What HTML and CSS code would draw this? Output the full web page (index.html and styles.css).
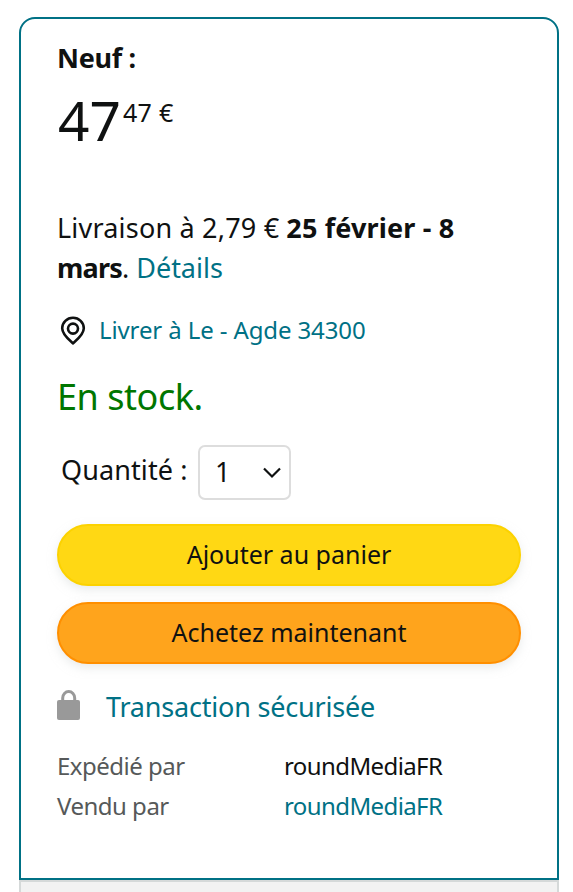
FILE: index.html
```html
<!DOCTYPE html>
<html lang="fr">
<head>
  <meta charset="utf-8">
  <title>Neuf : 47,47 €</title>
  <link rel="stylesheet" href="styles.css">
</head>

<body>
<div class="buybox">
  <div class="condition">Neuf :</div>

  <div class="price">
    <span class="price-whole">47</span>
    <span class="price-fraction">47 €</span>
  </div>

  <div class="delivery">
    <div><span class="delivery-cost">Livraison à 2,79 €</span> <b class="delivery-date">25 février - 8</b></div>
    <div><b class="delivery-month">mars</b>. <a class="link details" href="#">Détails</a></div>
  </div>

  <div class="location">
    <svg class="pin" viewBox="0 0 26 30" width="26" height="30">
      <path d="M13 27.2 C10 24.4 2.2 19 2.2 12.3 A10.8 10.6 0 0 1 23.8 12.3 C23.8 19 16 24.4 13 27.2 Z" />
      <circle cx="13" cy="12.6" r="5" />
    </svg>
    <a class="link location-link" href="#">Livrer à Le - Agde 34300</a>
  </div>

  <div class="stock">En stock.</div>

  <div class="quantity">
    <span class="quantity-label">Quantité :</span>
    <div class="quantity-select">
      <span class="quantity-value">1</span>
      <svg class="chevron" viewBox="0 0 18 12" width="18" height="12">
        <path d="M1 1.5 L9 9.5 L17 1.5" />
      </svg>
    </div>
  </div>

  <div class="buttons">
    <button class="btn btn-cart" type="button">Ajouter au panier</button>
    <button class="btn btn-buy" type="button">Achetez maintenant</button>
  </div>

  <div class="secure">
    <svg class="lock" viewBox="0 0 24 30" width="24" height="30">
      <path class="lock-shackle" d="M5.7 12 V8 A6 6.4 0 0 1 17.7 8 V12" />
      <rect x="0" y="10" width="23" height="20" rx="2" />
    </svg>
    <a class="link secure-link" href="#">Transaction sécurisée</a>
  </div>

  <div class="merchant">
    <span class="merchant-label">Expédié par</span>
    <span class="merchant-name">roundMediaFR</span>
    <span class="merchant-label">Vendu par</span>
    <a class="link merchant-name" href="#">roundMediaFR</a>
  </div>
</div>
<div class="next-offer"></div>
</body>
</html>
```
FILE: styles.css
```css
* {
  box-sizing: border-box;
}

body {
  margin: 0;
  padding: 17px 14px 0 19px;
  height: 892px;
  overflow: hidden;
  background: #fff;
  color: #0f1111;
  font-family: "Noto Sans", "Open Sans", sans-serif;
  font-size: 27px;
  line-height: 40px;
  white-space: nowrap;
}

.link {
  color: #007185;
  text-decoration: none;
}

.buybox {
  height: 863px;
  padding: 19px 36px 0;
  border: 2px solid #007185;
  border-radius: 16px 16px 0 0;
}

.condition {
  font-weight: 700;
  letter-spacing: -0.3px;
}

.price {
  display: flex;
  margin-top: 7px;
  height: 70px;
}

.price-whole {
  margin-left: 1px;
  font-size: 55px;
  line-height: 70px;
}

.price-fraction {
  margin: 9px 0 0 2px;
  font-size: 25px;
  line-height: 36px;
  letter-spacing: 0.3px;
}

.delivery {
  margin-top: 53px;
}

.delivery-cost {
  letter-spacing: 0.2px;
}

.delivery-date {
  letter-spacing: 0.15px;
}

.delivery-month {
  letter-spacing: -0.8px;
}

.location {
  display: flex;
  align-items: center;
  gap: 13px;
  margin: 22px 0 0 3px;
  font-size: 24px;
  letter-spacing: -0.12px;
}

.pin {
  margin-top: 2px;
  fill: none;
  stroke: #0f1111;
  stroke-width: 2.6;
}

.stock {
  margin-top: 23px;
  color: #007600;
  font-size: 36px;
  line-height: 48px;
  letter-spacing: -0.45px;
}

.quantity {
  display: flex;
  align-items: center;
  gap: 10px;
  height: 55px;
  margin: 24px 0 0 4px;
}

.quantity-label {
  width: 127px;
  padding-bottom: 5px;
  letter-spacing: 0.1px;
}

.quantity-select {
  display: flex;
  align-items: center;
  justify-content: space-between;
  width: 93px;
  height: 55px;
  padding: 0 8px 0 15px;
  border: 2px solid #ddd;
  border-radius: 7px;
}

.quantity-value {
  padding-bottom: 2px;
}

.chevron {
  fill: none;
  stroke: #0f1111;
  stroke-width: 2.2;
}

.buttons {
  display: flex;
  flex-direction: column;
  gap: 16px;
  margin-top: 24px;
}

.btn {
  height: 62px;
  padding: 0 0 2px;
  border: 2px solid;
  border-radius: 31px;
  box-shadow: 0 4px 10px rgba(213, 217, 217, 0.5);
  color: #0f1111;
  font-family: inherit;
  font-size: 25px;
}

.btn-cart {
  background: #ffd814;
  border-color: #fcd200;
}

.btn-buy {
  background: #ffa41c;
  border-color: #ff8f00;
}

.secure {
  display: flex;
  gap: 25px;
  margin-top: 23px;
  letter-spacing: -0.2px;
}

.lock {
  margin-top: 3px;
  fill: #999;
}

.lock-shackle {
  fill: none;
  stroke: #999;
  stroke-width: 3;
}

.merchant {
  display: grid;
  grid-template-columns: 227px 1fr;
  margin-top: 19px;
  font-size: 24px;
}

.merchant-label {
  color: #565959;
  letter-spacing: -0.5px;
}

.merchant-name {
  letter-spacing: -0.6px;
}

.next-offer {
  height: 20px;
  border: 2px solid #d5d9d9;
  background: #f2f2f2;
}
```
